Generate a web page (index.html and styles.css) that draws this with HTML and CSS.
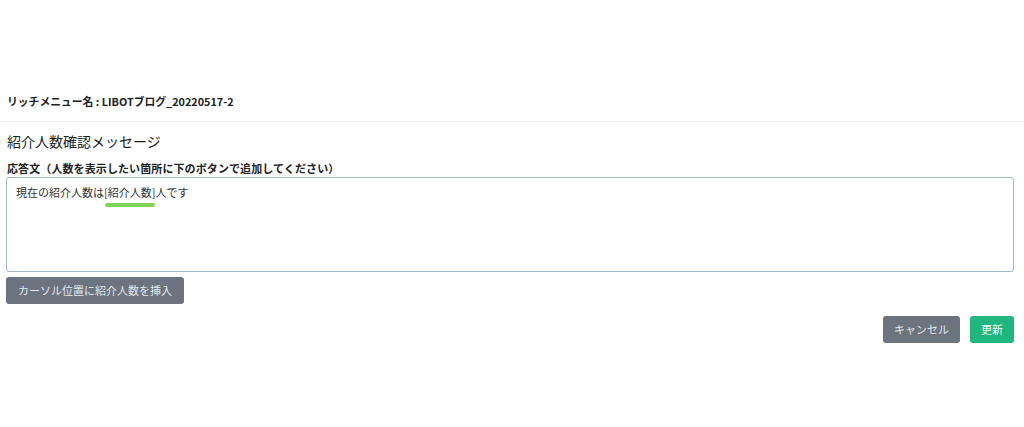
FILE: index.html
```html
<!DOCTYPE html>
<html lang="ja">
<head>
<meta charset="utf-8">
<link rel="stylesheet" href="styles.css">
</head>
<body>
<div class="header">リッチメニュー名 : LIBOTブログ_20220517-2</div>
<div class="content">
  <h2 class="title">紹介人数確認メッセージ</h2>
  <div class="label">応答文（人数を表示したい箇所に下のボタンで追加してください）</div>
  <div class="textarea">現在の紹介人数は[<span class="mark">紹介人数</span>]人です</div>
  <button class="btn btn-gray insert">カーソル位置に紹介人数を挿入</button>
  <div class="actions">
    <button class="btn btn-gray">キャンセル</button>
    <button class="btn btn-green">更新</button>
  </div>
</div>
</body>
</html>
```
FILE: styles.css
```css
* { box-sizing: border-box; }
body {
  margin: 0;
  background: #fff;
  font-family: "Noto Sans CJK JP", "Noto Sans", sans-serif;
  color: #222;
}
.header {
  padding: 93px 7px 12px;
  font-size: 10.8px;
  line-height: 16px;
  font-weight: bold;
  border-bottom: 1px solid #f1f1f1;
}
.content {
  padding: 9px 10px 0 6px;
}
.title {
  margin: 0 0 9px 1px;
  font-size: 14px;
  line-height: 20px;
  font-weight: normal;
  color: #222;
}
.label {
  margin: 0 0 1px 1px;
  font-size: 11px;
  line-height: 16px;
  font-weight: bold;
  letter-spacing: 0.1px;
}
.textarea {
  height: 95px;
  border: 1px solid #9fb9c6;
  border-radius: 3px;
  padding: 6px 9px;
  font-size: 11px;
  line-height: 16px;
  color: #333;
}
.mark {
  position: relative;
}
.mark::after {
  content: "";
  position: absolute;
  left: -3px;
  width: 50px;
  top: 19px;
  height: 4px;
  border-radius: 2px;
  background: #7fd55a;
}
.btn {
  font-family: "Noto Sans CJK JP", "Noto Sans", sans-serif;
  font-size: 11px;
  line-height: 15px;
  height: 27px;
  border: none;
  border-radius: 3px;
  padding: 0 11px;
  color: #e4e7eb;
}
.btn-gray { background: #6c7480; }
.btn-green { background: #20b67e; color: #eef8f2; }
.insert {
  display: block;
  margin-top: 5px;
  padding: 0 12px;
}
.actions {
  display: flex;
  justify-content: flex-end;
  gap: 10px;
  margin-top: 12px;
}
```
